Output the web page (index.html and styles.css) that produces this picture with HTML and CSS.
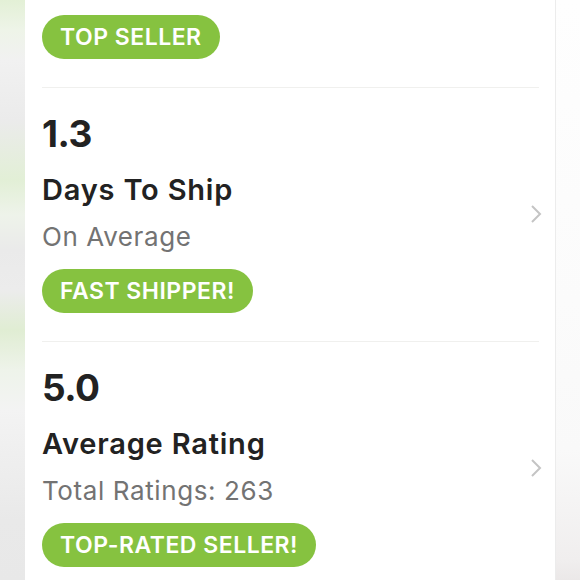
FILE: index.html
```html
<!DOCTYPE html>
<html lang="en">
<head>
    <meta charset="UTF-8">
    <meta name="viewport" content="width=device-width, initial-scale=1.0">
    <title>Seller Stats</title>
    <link rel="stylesheet" href="styles.css">
</head>
<body>

<div class="page">
    <div class="side side-left"></div>

    <div class="card">
        <div class="stat stat-top">
            <div class="stat-info">
                <span class="badge">TOP SELLER</span>
            </div>
        </div>

        <div class="stat">
            <div class="stat-info">
                <div class="stat-value">1.3</div>
                <div class="stat-title">Days To Ship</div>
                <div class="stat-sub">On Average</div>
                <span class="badge">FAST SHIPPER!</span>
            </div>
            <svg class="chevron" width="12" height="20" viewBox="0 0 12 20">
                <polyline points="2,2 10,10 2,18" fill="none" stroke="#c4c4c4" stroke-width="2"/>
            </svg>
        </div>

        <div class="stat">
            <div class="stat-info">
                <div class="stat-value">5.0</div>
                <div class="stat-title">Average Rating</div>
                <div class="stat-sub">Total Ratings: 263</div>
                <span class="badge">TOP-RATED SELLER!</span>
            </div>
            <svg class="chevron" width="12" height="20" viewBox="0 0 12 20">
                <polyline points="2,2 10,10 2,18" fill="none" stroke="#c4c4c4" stroke-width="2"/>
            </svg>
        </div>
    </div>

    <div class="side side-right"></div>
</div>

</body>
</html>
```

FILE: styles.css
```css
body {
    font-family: 'Inter', 'Noto Sans', sans-serif;
    margin: 0;
    padding: 0;
    background-color: #f7f7f7;
    height: 580px;
    overflow: hidden;
}

.page {
    display: flex;
    height: 580px;
}

.side {
    flex: none;
}

.side-left {
    width: 25px;
    background: linear-gradient(180deg,
        #e3f0d6 0px, #eef4e8 30px, #f1f1f1 60px, #ebebeb 120px,
        #e2efd6 180px, #eef3ea 215px, #eaeaea 250px, #ececec 290px,
        #e0edd3 330px, #eef3ea 370px, #f3f3f3 410px, #e9e9e9 520px, #e8e8e8 580px);
}

.card {
    width: 531px;
    flex: none;
    background-color: #ffffff;
    border-right: 1px solid #ececec;
    padding: 0 16px 0 17px;
    box-sizing: border-box;
}

.side-right {
    flex: 1;
    background: linear-gradient(180deg, #fefefe 0px, #fbfbfb 300px, #f9f9f9 450px, #f0eeee 560px, #ebe8e8 580px);
}

.stat {
    display: flex;
    align-items: center;
    border-bottom: 1px solid #f0f0ee;
    padding: 26px 0 28px 0;
}

.stat-top {
    padding-top: 15px;
}

.stat-info {
    flex: 1;
    display: flex;
    flex-direction: column;
    align-items: flex-start;
}

.stat-value {
    font-size: 37px;
    line-height: 40px;
    font-weight: 700;
    color: #222222;
    letter-spacing: -0.5px;
}

.stat-title {
    font-size: 29px;
    line-height: 34px;
    font-weight: 600;
    color: #222222;
    letter-spacing: 0.8px;
    margin-top: 19px;
}

.stat-sub {
    font-size: 26px;
    line-height: 30px;
    color: #737373;
    letter-spacing: 0.6px;
    margin-top: 15px;
}

.badge {
    display: inline-block;
    height: 44px;
    line-height: 44px;
    padding: 0 18px;
    border-radius: 22px;
    background-color: #86c240;
    color: #ffffff;
    font-size: 23px;
    font-weight: 600;
    letter-spacing: 0.5px;
    margin-top: 17px;
}

.stat-top .badge {
    margin-top: 0;
}

.chevron {
    flex: none;
    margin-right: -3px;
}
```
